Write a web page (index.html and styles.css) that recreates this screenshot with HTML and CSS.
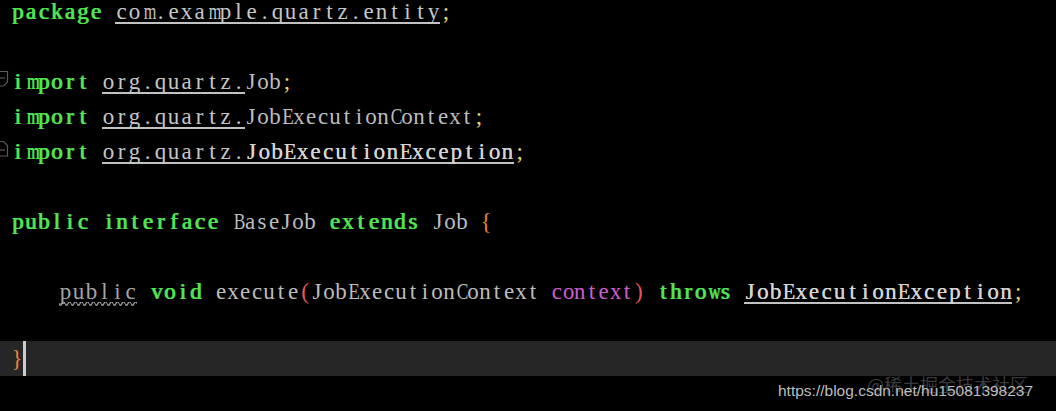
FILE: index.html
```html
<!DOCTYPE html>
<html>
<head>
<meta charset="utf-8">
<link rel="stylesheet" href="styles.css">
</head>
<body>
<div class="editor">
  <div class="line"><span class="gutter"></span><span class="code"><span class="kw">package </span><span class="pkg">com.example.quartz.entity</span><span class="semi">;</span></span></div>
  <div class="line"><span class="gutter"></span><span class="code"></span></div>
  <div class="line"><span class="gutter"><svg class="fold" width="11" height="20" viewBox="0 0 11 20"><path d="M-2 2.5 H7.5 V13 L3.5 17 H-2" fill="none" stroke="#5a5a5a" stroke-width="1.2"/><path d="M0 9 H5" stroke="#5a5a5a" stroke-width="1.2"/></svg></span><span class="code"><span class="kw">import </span><span class="pkg">org.quartz.</span>Job<span class="semi">;</span></span></div>
  <div class="line"><span class="gutter"></span><span class="code"><span class="kw">import </span><span class="pkg">org.quartz.</span>JobExecutionContext<span class="semi">;</span></span></div>
  <div class="line"><span class="gutter"><svg class="fold" width="11" height="20" viewBox="0 0 11 20"><path d="M-2 17 H7.5 V6.5 L3.5 2.5 H-2" fill="none" stroke="#5a5a5a" stroke-width="1.2"/><path d="M0 11 H5" stroke="#5a5a5a" stroke-width="1.2"/></svg></span><span class="code"><span class="kw">import </span><span class="pkg">org.quartz.<span class="ref">JobExecutionException</span></span><span class="semi">;</span></span></div>
  <div class="line"><span class="gutter"></span><span class="code"></span></div>
  <div class="line"><span class="gutter"></span><span class="code"><span class="kw">public interface </span>BaseJob <span class="kw">extends </span>Job <span class="brace">{</span></span></div>
  <div class="line"><span class="gutter"></span><span class="code"></span></div>
  <div class="line"><span class="gutter"></span><span class="code">    <span class="unused">public</span><span class="wide"> </span><span class="kw">void </span>execute<span class="paren">(</span>JobExecutionContext <span class="param">context</span><span class="paren">)</span> <span class="kw throws">throws </span><span class="pkg"><span class="ref">JobExecutionException</span></span><span class="semi">;</span></span></div>
  <div class="line short"><span class="gutter"></span><span class="code"></span></div>
  <div class="line current"><span class="gutter"></span><span class="code"><span class="brace">}</span><span class="caret"></span></span></div>
</div>
<div class="wm-cn">@稀土掘金技术社区</div>
<div class="wm-url">https://blog.csdn.net/hu15081398237</div>
<script src="script.js"></script>
</body>
</html>
```

FILE: styles.css
```css
html, body {
  margin: 0;
  padding: 0;
  background: #000;
}
body {
  width: 1056px;
  height: 411px;
  overflow: hidden;
  position: relative;
  font-family: "Liberation Serif", "DejaVu Serif", serif;
}
.editor {
  margin-top: -6px;
  display: flex;
  flex-direction: column;
}
.line {
  display: flex;
  height: 35px;
  line-height: 35px;
  font-size: 23px;
  color: #bdbdbd;
}
.line.short {
  height: 32px;
}
.line.current {
  background: #262626;
}
.gutter {
  width: 11px;
  flex: none;
  display: flex;
  align-items: center;
}
.fold {
  display: block;
  margin-top: -6px;
}
.code {
  display: block;
  flex: 1;
  white-space: pre;
  --cw: 12px;
}
.c {
  display: inline-block;
  width: var(--cw);
  line-height: 1;
  text-align: center;
  vertical-align: baseline;
}
.g {
  display: inline-block;
  transform-origin: 50% 50%;
}
.kw {
  color: #50e450;
  text-shadow: 1px 0 0 currentColor;
  --cw: 13px;
}
.kw.throws {
  --cw: 12.4px;
}
.pkg {
  display: inline-block;
  color: #c6c6c6;
  --cw: 13px;
  background: linear-gradient(#c2c2c2, #c2c2c2) no-repeat 0 28px / 100% 2px;
}
.ref {
  color: #d4d4d4;
  text-shadow: 0.25px 0 0 currentColor;
  --cw: 12.8px;
}
.semi {
  color: #e2d874;
}
.brace {
  color: #e8823c;
}
.paren {
  color: #e85454;
}
.param {
  color: #d05ed0;
  --cw: 11.7px;
}
.unused {
  display: inline-block;
  color: #a4a4a4;
  --cw: 13px;
  background: url("data:image/svg+xml,%3Csvg xmlns='http://www.w3.org/2000/svg' width='6' height='6'%3E%3Cpath d='M0 1.5 Q1.5 5 3 1.5 T6 1.5' fill='none' stroke='%239a9a9a' stroke-width='1.4'/%3E%3C/svg%3E") repeat-x 0 28px;
}
.wide {
  --cw: 13px;
}
.caret {
  display: inline-block;
  vertical-align: top;
  width: 3px;
  height: 35px;
  background: #cdcdcd;
}
.wm-cn {
  position: absolute;
  left: 867px;
  top: 373px;
  font-family: "Noto Sans CJK SC", sans-serif;
  font-size: 18px;
  line-height: 22px;
  color: rgba(110, 110, 110, 0.55);
  white-space: nowrap;
}
.wm-url {
  position: absolute;
  left: 778px;
  top: 381px;
  font-family: "Liberation Sans", Arial, sans-serif;
  font-size: 15.5px;
  line-height: 20px;
  color: #bdbdbd;
  white-space: nowrap;
}
```

FILE: script.js
```js
(function () {
  var codes = document.querySelectorAll('.code');
  codes.forEach(function (code) {
    var walker = document.createTreeWalker(code, NodeFilter.SHOW_TEXT);
    var nodes = [];
    while (walker.nextNode()) nodes.push(walker.currentNode);
    nodes.forEach(function (n) {
      var frag = document.createDocumentFragment();
      Array.from(n.data).forEach(function (ch) {
        var cell = document.createElement('span');
        cell.className = 'c';
        var g = document.createElement('span');
        g.className = 'g';
        g.textContent = ch;
        cell.appendChild(g);
        frag.appendChild(cell);
      });
      n.parentNode.replaceChild(frag, n);
    });
  });
  document.querySelectorAll('.c').forEach(function (cell) {
    var g = cell.firstChild;
    var cw = cell.getBoundingClientRect().width;
    var w = g.getBoundingClientRect().width;
    var limit = cw * 0.97;
    if (w > limit) {
      g.style.transform = 'scaleX(' + (limit / w).toFixed(3) + ')';
    }
  });
})();
```
